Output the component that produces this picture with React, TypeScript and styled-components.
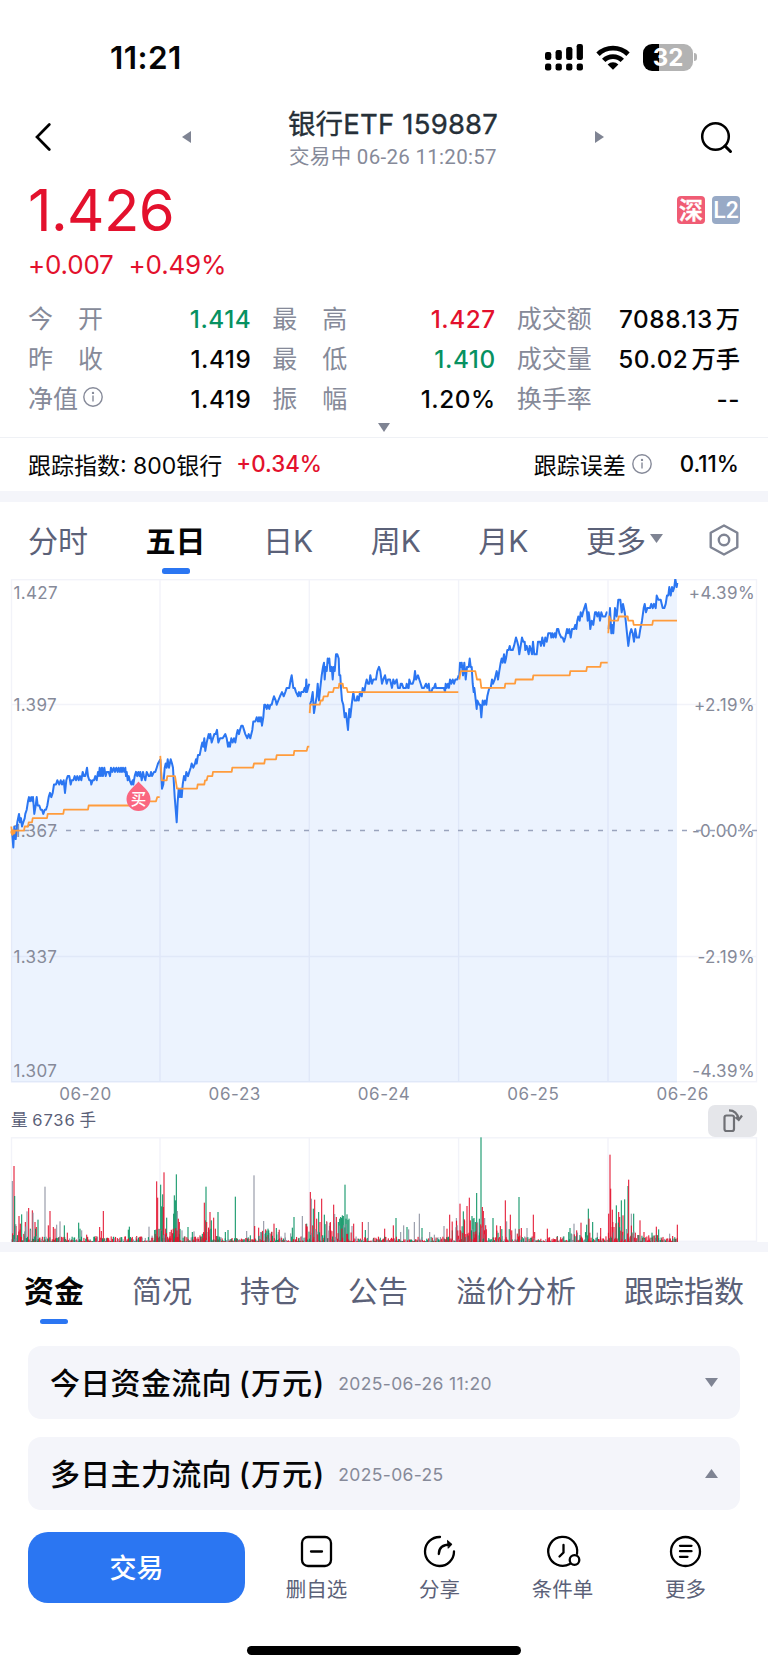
import React from 'react';
import styled, { createGlobalStyle } from 'styled-components';

const color = {
  red: '#e3112d',
  green: '#079161',
  ink: '#050506',
  title: '#263038',
  muted: '#868a99',
  slate: '#5b6178',
  blue: '#2b76f2',
  orange: '#ff9c3c',
  band: '#f4f5fa',
  grid: '#f2f3f9',
};

const GlobalStyle = createGlobalStyle`
  * { box-sizing: border-box; }
  body {
    margin: 0;
    background: #fff;
    color: ${color.ink};
    font-family: Inter, 'Noto Sans CJK SC', sans-serif;
    -webkit-font-smoothing: antialiased;
  }
  svg { display: block; flex: none; }
`;

const Screen = styled.main`
  width: 768px;
  height: 1669px;
  display: flex;
  flex-direction: column;
  overflow: hidden;
  background: #fff;
  white-space: nowrap;
`;

/* ---------- status bar ---------- */

const StatusBar = styled.header`
  height: 100px;
  padding: 14px 69px 0 110px;
  display: flex;
  align-items: center;
  justify-content: space-between;
`;

const Clock = styled.span`
  font-size: 31.5px;
  font-weight: 600;
  letter-spacing: 0.4px;
`;

const StatusIcons = styled.div`
  display: flex;
  align-items: center;
  gap: 13px;
`;

const Battery = styled.div`
  position: relative;
  width: 50px;
  height: 27px;
  margin-right: 6px;
  border-radius: 9px;
  background: linear-gradient(90deg, #000 32%, #b3b3b3 32%);
  color: #fff;
  font-size: 24px;
  font-weight: 700;
  line-height: 27px;
  text-align: center;
  &::after {
    content: '';
    position: absolute;
    left: 51px;
    top: 9.5px;
    width: 3px;
    height: 8px;
    border-radius: 0 4px 4px 0;
    background: #b3b3b3;
  }
`;

/* ---------- title bar ---------- */

const TitleBar = styled.nav`
  height: 74px;
  padding: 0 35px;
  display: grid;
  grid-template-columns: 147px 9px 1fr 9px 96px 33px;
  align-items: center;
`;

const TitleBlock = styled.div`
  display: flex;
  flex-direction: column;
  align-items: center;
`;

const Title = styled.h1`
  margin: 4px 0 0;
  font-size: 27.5px;
  line-height: 34px;
  font-weight: 400;
  letter-spacing: 0.2px;
  color: ${color.title};
  -webkit-text-stroke: 0.35px ${color.title};
`;

const Subtitle = styled.div`
  margin-top: 2px;
  font-family: Roboto, 'Noto Sans CJK SC', sans-serif;
  font-size: 20.5px;
  line-height: 28px;
  letter-spacing: 0.3px;
  color: ${color.muted};
`;

/* ---------- quote ---------- */

const Quote = styled.section`
  height: 123px;
  padding: 0 28px;
  display: flex;
  justify-content: space-between;
`;

const Price = styled.div`
  height: 72px;
  font-size: 58px;
  line-height: 72px;
  letter-spacing: -0.6px;
  color: ${color.red};
`;

const Changes = styled.div`
  display: flex;
  gap: 15px;
  font-size: 26px;
  line-height: 37px;
  letter-spacing: -0.2px;
  color: ${color.red};
`;

const Badges = styled.div`
  display: flex;
  gap: 7px;
  padding-top: 22px;
`;

const Badge = styled.span<{ $bg: string; $latin?: boolean }>`
  width: 28px;
  height: 28px;
  border-radius: 4px;
  background: ${(p) => p.$bg};
  color: #fff;
  font-family: ${(p) => (p.$latin ? 'Roboto' : "'Noto Sans CJK SC'")}, sans-serif;
  font-size: ${(p) => (p.$latin ? 23 : 24)}px;
  font-weight: 500;
  line-height: ${(p) => (p.$latin ? 30 : 26)}px;
  text-align: center;
  -webkit-text-stroke: ${(p) => (p.$latin ? 0 : 0.5)}px #fff;
`;

/* ---------- statistics ---------- */

const Stats = styled.section`
  padding: 0 29px 0 28px;
  display: grid;
  grid-template-columns: repeat(3, 1fr);
  grid-auto-rows: 40.3px;
  column-gap: 22px;
`;

const Stat = styled.div`
  display: flex;
  align-items: center;
  justify-content: space-between;
`;

const StatLabel = styled.span`
  width: 75px;
  padding-bottom: 1px;
  display: flex;
  align-items: center;
  justify-content: space-between;
  font-size: 25px;
  color: ${color.muted};
`;

const StatValue = styled.span<{ $color?: string }>`
  margin-right: -1px;
  padding-top: 3px;
  display: flex;
  align-items: baseline;
  gap: 3px;
  font-size: 24.3px;
  font-weight: 500;
  line-height: 36px;
  letter-spacing: 0.55px;
  color: ${(p) => p.$color ?? color.ink};
`;

const Unit = styled.span`
  letter-spacing: 0;
`;

const Expander = styled.div`
  height: 20px;
  display: flex;
  justify-content: center;
  padding-top: 5px;
  border-bottom: 1px solid #eff1f5;
`;

const Tracking = styled.section`
  height: 53px;
  padding: 0 29px 0 28px;
  display: flex;
  align-items: center;
  justify-content: space-between;
  font-size: 23px;
`;

const TrackGroup = styled.div<{ $gap: number }>`
  display: flex;
  align-items: center;
  gap: ${(p) => p.$gap}px;
`;

const Emphasis = styled.span<{ $color?: string; $indent?: number }>`
  margin-left: ${(p) => p.$indent ?? 0}px;
  font-size: 22.3px;
  font-weight: 500;
  line-height: 30px;
  color: ${(p) => p.$color ?? color.ink};
`;

const Band = styled.div<{ $h: number }>`
  height: ${(p) => p.$h}px;
  background: ${color.band};
`;

/* ---------- tabs ---------- */

const Tab = styled.div<{ $active?: boolean; $bar: number }>`
  position: relative;
  height: 74px;
  display: flex;
  align-items: center;
  gap: 4px;
  font-size: 30px;
  font-weight: ${(p) => (p.$active ? 700 : 400)};
  color: ${(p) => (p.$active ? color.ink : color.slate)};
  &::after {
    content: '';
    display: ${(p) => (p.$active ? 'block' : 'none')};
    position: absolute;
    left: calc(50% - 14px);
    top: ${(p) => p.$bar}px;
    width: 28px;
    height: 5.5px;
    border-radius: 2.5px;
    background: ${color.blue};
  }
`;

const PeriodTabs = styled.nav`
  height: 77px;
  padding: 0 29px 0 28px;
  display: flex;
  ${Tab} + ${Tab} {
    margin-left: 57.5px;
  }
  ${Tab} + ${Tab}:last-child {
    margin-left: auto;
    padding-top: 3px;
  }
`;

const SectionTabs = styled.nav`
  height: 94px;
  padding: 0 24px;
  display: flex;
  justify-content: space-between;
`;

/* ---------- volume header ---------- */

const VolumeHeader = styled.div`
  height: 34px;
  padding: 2px 11px 0;
  display: flex;
  justify-content: space-between;
`;

const VolumeText = styled.span`
  font-size: 16.5px;
  line-height: 31px;
  letter-spacing: 0.85px;
  word-spacing: -1.5px;
  color: ${color.slate};
`;

const RotateButton = styled.button`
  width: 49px;
  height: 32px;
  padding: 0;
  border: 0;
  border-radius: 7px;
  background: #e5e6ea;
  display: flex;
  align-items: center;
  justify-content: center;
`;

/* ---------- cards ---------- */

const Cards = styled.section`
  height: 186px;
  padding: 0 28px;
  display: flex;
  flex-direction: column;
  gap: 17.5px;
`;

const Card = styled.div`
  height: 73.5px;
  padding: 0 22px 0 22px;
  border-radius: 13px;
  background: ${color.band};
  display: flex;
  align-items: center;
`;

const CardTitle = styled.h2`
  margin: 0;
  padding-bottom: 4px;
  display: flex;
  gap: 7px;
  font-size: 30px;
  font-weight: 500;
  letter-spacing: 0.3px;
`;

const CardUnit = styled.span`
  letter-spacing: 1.1px;
`;

const CardDate = styled.span`
  flex: 1;
  margin-left: 13px;
  padding-top: 1px;
  font-size: 17.5px;
  letter-spacing: 0.35px;
  color: ${color.muted};
`;

/* ---------- bottom bar ---------- */

const BottomBar = styled.footer`
  height: 71px;
  padding-left: 28px;
  display: flex;
`;

const TradeButton = styled.button`
  width: 217px;
  height: 71px;
  margin-right: 10px;
  padding: 0 0 1px;
  border: 0;
  border-radius: 20px;
  background: ${color.blue};
  color: #fff;
  font-family: inherit;
  font-size: 27px;
  font-weight: 500;
`;

const Action = styled.div`
  width: 123px;
  display: flex;
  flex-direction: column;
  align-items: center;
  font-size: 20.5px;
  line-height: 30px;
  color: ${color.slate};
  svg { margin: 3px 0 7px; }
`;

const HomeIndicator = styled.div`
  width: 274px;
  height: 9px;
  margin: 43px auto 0;
  border-radius: 5px;
  background: #000;
`;

/* ---------- small icons ---------- */

const Triangle = ({ dir, w = 13, h = 9 }: { dir: 'up' | 'down' | 'left' | 'right'; w?: number; h?: number }) => {
  const points = {
    down: `0,0 ${w},0 ${w / 2},${h}`,
    up: `0,${h} ${w},${h} ${w / 2},0`,
    left: `${w},0 ${w},${h} 0,${h / 2}`,
    right: `0,0 0,${h} ${w},${h / 2}`,
  }[dir];
  return (
    <svg width={w} height={h}>
      <polygon points={points} fill="#7f8493" />
    </svg>
  );
};

const InfoIcon = () => (
  <svg width="20" height="20" viewBox="0 0 20 20" fill="none" stroke={color.muted} strokeWidth="1.4">
    <circle cx="10" cy="10" r="9.2" />
    <path d="M10 8.6V14.4" />
    <circle cx="10" cy="5.9" r="0.5" />
  </svg>
);

const SignalIcon = () => (
  <svg width="38" height="27" viewBox="0 0 38 27">
    {[8, 6, 3, 0].map((top, i) => (
      <g key={top}>
        <rect x={i * 10.55} y={top} width="6.3" height={16 - top} rx="2.2" />
        <rect x={i * 10.55} y="19.5" width="6.3" height="7" rx="2.2" />
      </g>
    ))}
  </svg>
);

const WifiIcon = () => (
  <svg width="34" height="25" viewBox="0 0 34 25" fill="none" stroke="#000">
    <path d="M2 9.3A21.5 21.5 0 0 1 32 9.3" strokeWidth="4.8" />
    <path d="M7.7 15.4A13.2 13.2 0 0 1 26.3 15.4" strokeWidth="4.8" />
    <path d="M17 24.8L11.6 19.4A7.8 7.8 0 0 1 22.4 19.4Z" fill="#000" stroke="none" />
  </svg>
);

/* ---------- chart data ---------- */

const TICK = 12.6;
const BASE = 782;

/* Intraday samples per session: time offset, ticks above the previous close. */
const sessions: string[] = [
  '36 0,40 -4,43 1,47 -2,52 2,57 4,60 2,63 3,66 1,70 2,74 3,76 4,80 5,84 7,87 8,90 7,94 8,97 7,99 8,103 4,107 6,110 8,113 6,118 6,122 5,126 5,130 4,134 5,138 5,142 6,146 8,150 9,154 8,158 9,162 11,168 11,172 12,178 11,182 12,186 11,191 12,195 9,199 12,203 13,208 13,212 11,215 12,220 12,224 13,228 12,232 13,236 12,240 13,244 12,248 14,252 13,256 13,261 15,264 13,268 12,272 12,274 11,278 12,282 12,286 13,290 12,294 14,297 13,299 15,303 13,306 15,309 13,313 15,317 13,320 14,326 14,330 13,333 15,337 14,341 15,345 14,349 15,353 14,356 15,360 14,363 15,366 14,369 15,373 14,376 15,378 13,380 14,383 12,386 13,389 12,394 11,398 12,400 11,404 13,408 14,412 13,415 14,419 13,421 14,425 12,429 14,432 13,436 12,440 14,446 13,450 13,453 14,456 13,462 14,466 14,470 15,474 16,478 16.5,481 17',
  '481 17,486 10,490 11,494 15,497 16,500 15,503 17,507 15,512 17,516 16,519 15,521 12,524 8,527 5,530 2,533 7,536 10,540 8,543 10,545 8,548 11,552 13,556 12,559 14,564 13,568 14,572 15,575 16,580 15,585 16,588 17,590 16,594 18,599 18,604 20,607 21,610 20,613 22,616 19,620 21,626 23,629 22,631 23,635 21,639 22,643 23,647 23,651 24,655 21,660 22,668 22,676 23,680 22,684 20,687 21,690 20,694 22,698 21,702 22,706 21,710 23,713 24,717 23,720 24,724 25,728 25,732 24,736 23,742 22,746 23,751 22,757 24,760 26,766 26,770 27,774 26,777 27,780 26,783 27,786 25,790 27,793 30,796 30,800 29,803 30,808 29,811 30,815 30,818 31,822 32,827 31,830 30,835 31,840 32,846 33,851 32,856 33,860 34,868 34,872 36,875 37,880 34,884 34,888 33,894 32,897 33,901 32,904 33,910 33,914 34,917 33,919 36,921 33,924 34,928 35',
  '930 30,934 31,938 33,942 28,946 30,950 32,953 35,957 31,961 34,965 37,969 39,972 40,974 36,977 39,980 38,983 41,986 40,988 41,991 38,995 39,998 36,1001 39,1004 38,1008 42,1012 42,1016 41,1018 37,1021 37,1023 34,1026 31,1030 30,1034 27,1038 28,1044 24,1048 29,1051 27,1055 30,1060 33,1064 31,1070 31,1072 32,1076 31,1080 33,1085 32,1088 34,1093 33,1097 35,1100 36,1104 35,1108 35,1111 37,1116 35,1120 36,1128 36,1132 38,1137 39,1141 38,1146 35,1150 36,1155 37,1160 35,1164 36,1170 36,1176 34,1180 36,1184 35,1190 36,1194 34,1200 34,1202 35,1206 35,1210 34,1218 34,1220 35,1224 34,1226 34,1228 36,1232 35,1238 35,1242 36,1245 38,1248 36,1254 37,1258 36,1262 35,1266 34,1272 34,1278 35,1282 34,1286 35,1289 33,1294 33,1298 34,1302 34,1306 35,1308 34,1332 34,1335 33,1337 35,1340 34,1344 35,1347 34,1350 36,1354 35,1358 36,1362 35,1366 36,1372 36,1376 37',
  '1378 37,1380 40,1383 39,1385 40,1389 37,1393 40,1397 36,1401 39,1406 39,1409 41,1412 39,1415 39,1418 35,1421 33,1423 34,1426 32,1430 29,1432 31,1438 30,1441 30,1444 27,1448 31,1452 30,1455 31,1459 30,1462 32,1465 33,1468 34,1472 34,1476 36,1479 35,1484 36,1490 38,1494 36,1498 38,1502 40,1505 41,1508 40,1512 42,1515 40,1518 41,1522 43,1526 43,1529 44,1532 43,1538 43,1542 44,1548 46,1552 45,1555 44,1558 42,1562 44,1566 46,1570 45,1574 45,1576 43,1580 44,1583 43,1586 42,1589 44,1593 43,1596 42,1599 45,1603 42,1610 42,1614 45,1620 45,1623 44,1627 46,1632 44,1636 46,1640 45,1645 47,1652 47,1654 46,1657 47,1660 46,1664 47,1667 46,1671 48,1675 48,1678 47,1684 46,1688 46,1692 45,1696 46,1701 48,1704 47,1708 48,1712 46,1716 48,1722 48,1726 49,1729 48,1732 50,1735 51,1739 50,1742 52,1746 51,1749 52,1753 53,1757 54,1761 52,1763 50,1766 52,1768 51,1771 48,1775 50,1780 49,1785 52,1789 52,1792 51,1796 52,1800 50,1804 52,1808 51,1816 51,1820 52,1822 52',
  '1826 48,1830 53,1834 47,1837 49,1840 47,1845 53,1850 51,1855 55,1861 55,1865 52,1869 54,1874 52,1877 50,1881 47,1885 44,1890 47,1894 48,1898 47,1902 45,1906 48,1910 46,1917 46,1921 48,1926 50,1931 53,1934 54,1938 52,1942 53,1950 53,1954 54,1958 53,1962 54,1967 53,1970 56,1975 55,1982 55,1985 54,1988 53,1993 53,1997 54,2001 56,2005 56,2008 58,2012 56,2016 58,2019 57,2023 58,2026 60,2030 58,2032 59',
];

const averages: string[] = [
  '34 1,37 -1,40 0,72 0,74 1,84 1,86 2,96 2,98 3,141 3,143 4,190 4,192 5,264 5,266 6,381 6,430 6,432 7,468 7,472 8,479 8',
  '481 17.8,485 12,500 12,502 13,525 13,531 10,591 10,593 11,613 11,615 12,620 12,623 13,637 13,639 14,695 14,697 15,759 15,762 16,793 16,795 17,828 17,830 18,881 18,883 19,920 19,923 20,928 20',
  '929 28,931 30,959 30,962 31,968 31,971 32,983 32,986 33,999 33,1002 34,1016 34,1018 35,1028 35,1030 34,1040 34,1043 33,1375 33',
  '1378 36,1382 38,1426 38,1431 36,1441 36,1444 34,1514 34,1516 35,1545 35,1547 36,1598 36,1600 37,1709 37,1711 38,1759 38,1761 39,1801 39,1803 40,1823 40',
  '1825 47,1828 51,1832 50,1854 50,1856 51,1883 51,1885 50,1899 50,1901 49,1957 49,1959 50,2031 50',
];

const CHART_TOP = 579;
const toPoints = (series: string) =>
  series.split(',').map((pair) => {
    const [x, k] = pair.split(' ').map(Number);
    return [x / 3, 570 + (BASE - k * TICK) / 3 - CHART_TOP] as const;
  });
const joined = (series: string) => toPoints(series).map(([x, y]) => `${x.toFixed(1)},${y.toFixed(1)}`).join(' ');

/* Notable volume bars: time offset, height, direction (r up, g down, y flat). */
const spikes =
  '37 183 y,42 228 r,44 138 g,48 48 r,57 78 r,61 55 r,65 83 g,76 60 r,81 92 y,86 102 r,91 40 g,97 95 r,99 88 y,105 60 r,109 45 r,114 67 g,135 166 y,145 50 r,150 93 r,160 45 r,165 40 r,170 52 y,180 62 y,193 50 g,202 28 r,236 58 g,240 40 g,245 35 y,260 22 r,288 18 r,299 45 r,304 33 r,310 93 r,340 15 g,385 37 g,388 46 g,410 18 r,447 46 y,464 36 g,470 182 r,473 133 r,482 172 g,485 107 g,488 143 g,490 105 r,492 209 r,497 40 r,500 73 g,510 30 r,521 85 g,523 140 g,526 125 g,529 203 g,532 93 y,535 70 r,538 60 r,546 35 y,564 45 g,577 30 g,582 32 y,600 20 r,613 118 r,616 65 r,618 166 g,620 60 r,630 90 r,634 65 g,641 73 r,646 40 r,654 90 g,676 30 g,684 36 g,706 136 g,740 33 y,751 20 g,762 200 y,764 48 r,776 43 r,782 30 y,791 63 y,797 38 r,804 40 g,815 30 g,822 55 r,829 42 g,835 30 y,855 28 y,872 26 y,877 43 g,882 75 g,907 78 y,920 55 g,931 150 r,934 130 y,940 100 g,944 127 r,950 70 r,956 90 g,960 60 r,965 130 r,973 82 g,980 62 r,991 60 r,1001 112 r,1004 84 y,1009 75 r,1015 60 g,1019 70 g,1022 75 g,1025 72 g,1027 80 g,1030 78 g,1035 172 g,1038 70 g,1041 83 g,1044 66 g,1047 70 g,1056 48 y,1061 55 r,1087 60 r,1096 36 g,1105 60 y,1154 40 r,1180 50 r,1188 72 g,1202 30 y,1211 50 y,1221 45 g,1226 38 y,1243 60 y,1258 85 y,1266 42 g,1289 30 y,1303 22 y,1332 48 y,1341 40 r,1349 82 r,1357 35 g,1369 72 y,1380 115 r,1390 92 g,1393 68 r,1401 108 r,1408 133 r,1411 65 r,1416 78 g,1419 70 g,1422 72 g,1426 60 g,1430 147 g,1438 70 g,1443 314 g,1447 105 r,1450 93 r,1454 72 y,1479 72 g,1490 50 r,1501 48 r,1516 125 r,1520 62 y,1531 82 r,1546 40 y,1557 135 g,1564 42 r,1581 42 y,1600 82 r,1604 30 r,1642 40 r,1672 18 g,1710 42 g,1722 55 y,1730 35 r,1743 58 r,1760 52 g,1765 100 g,1767 70 r,1778 60 g,1792 28 y,1802 42 r,1826 85 r,1830 262 r,1832 160 r,1837 97 r,1842 45 r,1849 110 g,1856 90 r,1859 75 r,1864 125 g,1869 80 r,1874 128 g,1884 168 g,1886 187 r,1894 85 y,1901 85 g,1906 28 r,1920 65 r,1932 30 r,1956 28 g,1969 46 r,1976 38 g,2009 25 y,2018 18 r,2032 52 r';

type Bar = { x: number; h: number; c: string };
const barColor: Record<string, string> = { r: color.red, g: color.green, y: '#8b909f' };

/* Busy stretches of the week: from, to, typical height. */
const busy = [
  [36, 112, 42], [455, 545, 32], [606, 655, 40], [775, 840, 28], [915, 1060, 46],
  [1355, 1460, 50], [1488, 1560, 30], [1700, 1770, 26], [1824, 1910, 52], [1910, 1990, 16],
];

const quietBars: Bar[] = (() => {
  const bars: Bar[] = [];
  let seed = 20250626;
  const next = () => {
    seed = (seed * 1103515245 + 12345) % 2147483648;
    return seed / 2147483648;
  };
  for (let x = 36; x < 2033; x += 1.86) {
    const zone = busy.find(([a, b]) => x >= a && x <= b);
    const top = zone ? zone[2] : 12;
    const shape = next();
    const pick = next();
    const c = pick < 0.48 ? 'r' : pick < 0.76 ? 'g' : 'y';
    bars.push({ x, h: 2 + top * shape * shape * 1.25, c });
  }
  return bars;
})();

const spikeBars: Bar[] = spikes.split(',').map((s) => {
  const [x, h, c] = s.split(' ');
  return { x: Number(x), h: Number(h), c };
});

const dividers = [160, 309.3, 458.6, 608];

const PriceChart = () => (
  <svg width="768" height="524" viewBox="0 0 768 524" fontFamily="Inter, sans-serif" fontSize="17">
    <g stroke={color.grid} strokeWidth="1.4" fill="none">
      <rect x="11.5" y="0.7" width="745" height="502" />
      {dividers.map((x) => <path key={x} d={`M${x} 0V503`} />)}
      <path d="M11 125.5H757M11 377.5H757" />
    </g>
    {sessions.map((s, i) => {
      const pts = toPoints(s);
      const end = i < 4 ? dividers[i] : 677;
      const start = i ? dividers[i - 1] : 11.3;
      return (
        <polygon
          key={i}
          fill={color.blue}
          fillOpacity="0.09"
          points={`${start},503.5 ${start},${pts[0][1]} ${joined(s)} ${end},${pts[pts.length - 1][1]} ${end},503.5`}
        />
      );
    })}
    <g fill={color.muted} letterSpacing="0.35">
      <text x="13.5" y="19.7">1.427</text>
      <text x="13.5" y="131.7">1.397</text>
      <text x="13.5" y="257.7">1.367</text>
      <text x="13.5" y="383.7">1.337</text>
      <text x="13.5" y="497.7">1.307</text>
      <g textAnchor="end" letterSpacing="0.4">
        <text x="755" y="19.7">+4.39%</text>
        <text x="755" y="131.7">+2.19%</text>
        <text x="755" y="257.7">-0.00%</text>
        <text x="755" y="383.7">-2.19%</text>
        <text x="755" y="497.7">-4.39%</text>
      </g>
      <g textAnchor="middle" letterSpacing="0.6">
        {['06-20', '06-23', '06-24', '06-25', '06-26'].map((d, i) => (
          <text key={d} x={85.5 + i * 149.3} y="520.7">{d}</text>
        ))}
      </g>
    </g>
    <path d="M11 251.5H757" stroke="#9aa4bd" strokeWidth="1.4" strokeDasharray="5 9" strokeDashoffset="1" />
    <g fill="none" strokeLinejoin="round">
      {sessions.map((s, i) => <polyline key={i} points={joined(s)} stroke={color.blue} strokeWidth="2" />)}
      {averages.map((s, i) => <polyline key={i} points={joined(s)} stroke={color.orange} strokeWidth="1.8" />)}
    </g>
    <circle cx="13" cy="253" r="2.6" fill={color.orange} />
    <path d="M138.5 202.5C142 207 150.5 212 150.5 220A12 12 0 0 1 126.5 220C126.5 212 135 207 138.5 202.5Z" fill="#fa6680" />
    <text x="138.5" y="225.5" fill="#fff" fontSize="15.5" fontWeight="500" textAnchor="middle" fontFamily="'Noto Sans CJK SC', sans-serif">买</text>
  </svg>
);

const VolumeChart = () => (
  <svg width="768" height="105" viewBox="0 0 768 105">
    <g stroke={color.grid} strokeWidth="1.4" fill="none">
      <rect x="11.5" y="0.8" width="745" height="103.5" />
      {dividers.map((x) => <path key={x} d={`M${x} 0V105`} />)}
    </g>
    {[...spikeBars, ...quietBars].map((b, i) => (
      <rect key={i} x={b.x / 3 - 0.55} y={105 - b.h / 3} width="1.1" height={b.h / 3} fill={barColor[b.c]} fillOpacity="0.95" />
    ))}
  </svg>
);

/* ---------- content ---------- */

const stats: { label: string; value: string; unit?: string; tone?: string; info?: boolean }[] = [
  { label: '今开', value: '1.414', tone: color.green },
  { label: '最高', value: '1.427', tone: color.red },
  { label: '成交额', value: '7088.13', unit: '万' },
  { label: '昨收', value: '1.419' },
  { label: '最低', value: '1.410', tone: color.green },
  { label: '成交量', value: '50.02', unit: '万手' },
  { label: '净值', value: '1.419', info: true },
  { label: '振幅', value: '1.20%' },
  { label: '换手率', value: '--' },
];

const periods = ['分时', '五日', '日K', '周K', '月K'];
const sections = ['资金', '简况', '持仓', '公告', '溢价分析', '跟踪指数'];

const actions: { label: string; icon: React.ReactNode }[] = [
  { label: '删自选', icon: <><rect x="2" y="2" width="29" height="29" rx="6" /><path d="M11 16.5H22" /></> },
  {
    label: '分享',
    icon: <><path d="M17 2A14.5 14.5 0 1 0 31 16.5" /><path d="M15.8 19C15.8 13 19 9.5 27.5 9.5" /><path d="M24.8 5.7L28.8 9.3L25.5 13Z" fill="#000" strokeWidth="1" /></>,
  },
  {
    label: '条件单',
    icon: <><path d="M23.8 29A14.5 14.5 0 1 1 31 18.8" /><path d="M17.5 10V17.5L13.5 21.5" /><circle cx="28.5" cy="25" r="4.8" /></>,
  },
  { label: '更多', icon: <><circle cx="16.5" cy="16.5" r="14.5" /><path d="M11 10.8H22.5M11 16.2H22.5M11 21.8H18.5" strokeWidth="2.3" /></> },
];

export default function App() {
  return (
    <Screen>
      <GlobalStyle />
      <StatusBar>
        <Clock>11:21</Clock>
        <StatusIcons>
          <SignalIcon />
          <WifiIcon />
          <Battery>32</Battery>
        </StatusIcons>
      </StatusBar>

      <TitleBar>
        <svg width="16" height="28" viewBox="0 0 16 28" fill="none" stroke="#000" strokeWidth="2.7" strokeLinecap="round">
          <path d="M14.3 1.5L2 14L14.3 26.5" />
        </svg>
        <Triangle dir="left" w={9} h={12} />
        <TitleBlock>
          <Title>银行ETF 159887</Title>
          <Subtitle>交易中 06-26 11:20:57</Subtitle>
        </TitleBlock>
        <Triangle dir="right" w={9} h={12} />
        <span />
        <svg width="33" height="33" viewBox="0 0 33 33" fill="none" stroke="#000" strokeWidth="2.5">
          <circle cx="15.5" cy="15.5" r="13.3" />
          <path d="M25 25L30.5 30.5" strokeLinecap="round" strokeWidth="3" />
        </svg>
      </TitleBar>

      <Quote>
        <div>
          <Price>1.426</Price>
          <Changes>
            <span>+0.007</span>
            <span>+0.49%</span>
          </Changes>
        </div>
        <Badges>
          <Badge $bg="#f05c74">深</Badge>
          <Badge $bg="#98aac6" $latin>L2</Badge>
        </Badges>
      </Quote>

      <Stats>
        {stats.map((s) => (
          <Stat key={s.label}>
            <StatLabel>
              {s.info ? (
                <>
                  <span>{s.label}</span>
                  <InfoIcon />
                </>
              ) : (
                s.label.split('').map((ch) => <span key={ch}>{ch}</span>)
              )}
            </StatLabel>
            <StatValue $color={s.tone}>
              {s.value}
              {s.unit && <Unit>{s.unit}</Unit>}
            </StatValue>
          </Stat>
        ))}
      </Stats>
      <Expander>
        <Triangle dir="down" w={12} h={9} />
      </Expander>

      <Tracking>
        <TrackGroup $gap={14}>
          <span>跟踪指数: 800银行</span>
          <Emphasis $color={color.red}>+0.34%</Emphasis>
        </TrackGroup>
        <TrackGroup $gap={6}>
          <span>跟踪误差</span>
          <InfoIcon />
          <Emphasis $indent={22}>0.11%</Emphasis>
        </TrackGroup>
      </Tracking>
      <Band $h={11} />

      <PeriodTabs>
        {periods.map((p) => (
          <Tab key={p} $active={p === '五日'} $bar={66.5}>{p}</Tab>
        ))}
        <Tab $bar={66.5}>
          更多
          <Triangle dir="down" w={13} h={9} />
        </Tab>
        <Tab $bar={66.5}>
          <svg width="30" height="32" viewBox="0 0 30 32" fill="none" stroke="#7f8493" strokeWidth="2.4" strokeLinejoin="round">
            <path d="M15 1.5L28.3 8.7V23.3L15 30.5L1.7 23.3V8.7Z" />
            <circle cx="15" cy="16" r="5.2" />
          </svg>
        </Tab>
      </PeriodTabs>

      <PriceChart />
      <VolumeHeader>
        <VolumeText>量 6736 手</VolumeText>
        <RotateButton>
          <svg width="22" height="24" viewBox="0 0 22 24" fill="none" stroke="#6f7075" strokeWidth="2.2">
            <rect x="2.5" y="6.5" width="9.5" height="15.5" rx="2" />
            <path d="M7 1.3C12 1.3 15.5 4.5 16.6 10" />
            <path d="M13.5 8.2L16.7 11L20 6.5" />
          </svg>
        </RotateButton>
      </VolumeHeader>
      <VolumeChart />
      <Band $h={10} />

      <SectionTabs>
        {sections.map((s) => (
          <Tab key={s} $active={s === '资金'} $bar={67}>{s}</Tab>
        ))}
      </SectionTabs>

      <Cards>
        <Card>
          <CardTitle><span>今日资金流向</span><CardUnit>(万元)</CardUnit></CardTitle>
          <CardDate>2025-06-26 11:20</CardDate>
          <Triangle dir="down" w={13} h={9} />
        </Card>
        <Card>
          <CardTitle><span>多日主力流向</span><CardUnit>(万元)</CardUnit></CardTitle>
          <CardDate>2025-06-25</CardDate>
          <Triangle dir="up" w={13} h={9} />
        </Card>
      </Cards>

      <BottomBar>
        <TradeButton>交易</TradeButton>
        {actions.map((a) => (
          <Action key={a.label}>
            <svg width="33" height="33" viewBox="0 0 33 33" fill="none" stroke="#000" strokeWidth="2.3" strokeLinecap="round" overflow="visible">
              {a.icon}
            </svg>
            {a.label}
          </Action>
        ))}
      </BottomBar>
      <HomeIndicator />
    </Screen>
  );
}
